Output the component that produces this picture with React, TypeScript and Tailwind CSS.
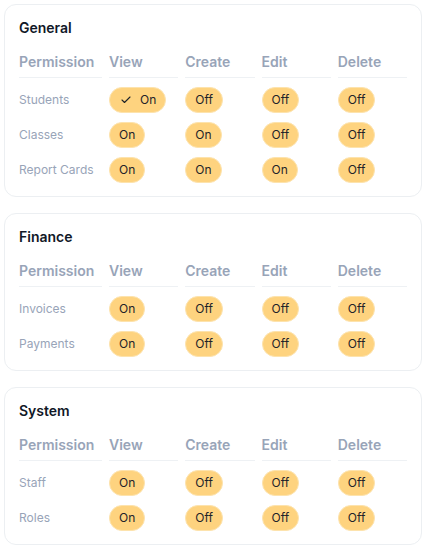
import React from "react";
import { Check } from "lucide-react";

type Row = { name: string; v: boolean[]; checked?: boolean };
type Section = { title: string; rows: Row[] };

const sections: Section[] = [
  {
    title: "General",
    rows: [
      { name: "Students", v: [true, false, false, false], checked: true },
      { name: "Classes", v: [true, true, false, false] },
      { name: "Report Cards", v: [true, true, true, false] },
    ],
  },
  {
    title: "Finance",
    rows: [
      { name: "Invoices", v: [true, false, false, false] },
      { name: "Payments", v: [true, false, false, false] },
    ],
  },
  {
    title: "System",
    rows: [
      { name: "Staff", v: [true, false, false, false] },
      { name: "Roles", v: [true, false, false, false] },
    ],
  },
];

const heads = ["Permission", "View", "Create", "Edit", "Delete"];

function Pill({ on, checked }: { on: boolean; checked?: boolean }) {
  return (
    <span className="inline-flex h-[26px] items-center gap-[8px] rounded-full border border-[#fde3ad] bg-[#fed37f] px-[9px] text-[12px] text-[#1f2329]">
      {checked && <Check size={12} strokeWidth={2.2} className="ml-[1px]" />}
      {on ? "On" : "Off"}
    </span>
  );
}

export default function App() {
  return (
    <div
      className="flex w-[426px] flex-col gap-4 bg-white px-1 pt-1"
      style={{ fontFamily: "Inter, 'Noto Sans', sans-serif" }}
    >
      {sections.map((s) => (
        <div key={s.title} className="rounded-xl border border-[#eceff2] bg-white p-[14px]">
          <div className="text-[14px] font-semibold leading-[18px] text-[#111827]">{s.title}</div>
          <div className="mt-[15px] grid grid-cols-[83px_repeat(4,1fr)] gap-x-[7px]">
            {heads.map((h) => (
              <div
                key={h}
                className="border-b border-[#eef1f4] pb-[5px] text-[14px] font-semibold leading-[20px] text-[#98a4b8]"
              >
                {h}
              </div>
            ))}
          </div>
          <div className="mt-[8px] flex flex-col gap-[9px]">
            {s.rows.map((r) => (
              <div key={r.name} className="grid h-[26px] grid-cols-[83px_repeat(4,1fr)] items-center gap-x-[7px]">
                <div className="text-[12px] text-[#98a4b8]">{r.name}</div>
                {r.v.map((on, i) => (
                  <div key={i}>
                    <Pill on={on} checked={i === 0 && r.checked} />
                  </div>
                ))}
              </div>
            ))}
          </div>
        </div>
      ))}
    </div>
  );
}
